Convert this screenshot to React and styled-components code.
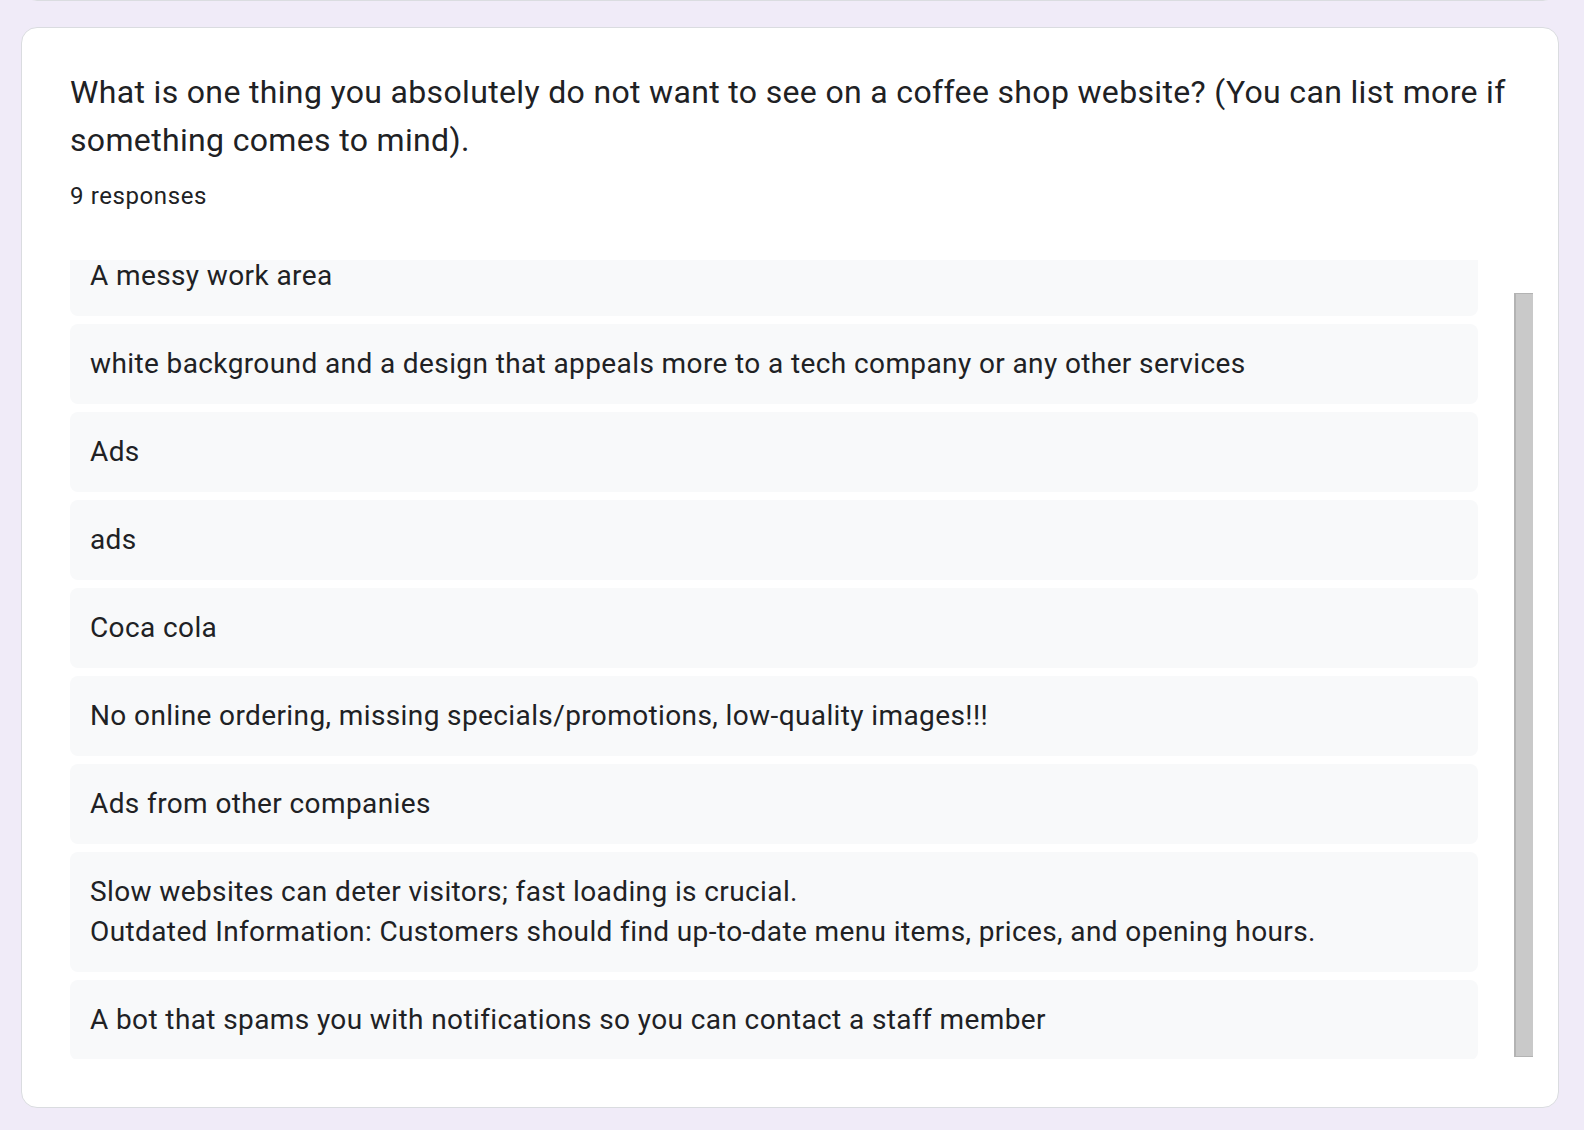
import styled, { createGlobalStyle } from 'styled-components'

const responses = [
    'A messy work area',
    'white background and a design that appeals more to a tech company or any other services',
    'Ads',
    'ads',
    'Coca cola',
    'No online ordering, missing specials/promotions, low-quality images!!!',
    'Ads from other companies',
    'Slow websites can deter visitors; fast loading is crucial.\nOutdated Information: Customers should find up-to-date menu items, prices, and opening hours.',
    'A bot that spams you with notifications so you can contact a staff member',
]

const App = () => {
    return (
        <Page>
            <GlobalStyle />
            <PrevCard />
            <Card>
                <Title>
                    What is one thing you absolutely do not want to see on a
                    coffee shop website? (You can list more if something comes
                    to mind).
                </Title>
                <Count>9 responses</Count>

                <ResponseArea>
                    <Viewport>
                        <List>
                            {responses.map((text, i) => (
                                <Row key={i}>{text}</Row>
                            ))}
                        </List>
                    </Viewport>
                    <Track>
                        <Thumb />
                    </Track>
                </ResponseArea>
            </Card>
        </Page>
    )
}

export default App

const GlobalStyle = createGlobalStyle`
    html, body {
        margin: 0;
        background: #f0ebf8;
    }
    body {
        font-family: Roboto, "Liberation Sans", Arial, sans-serif;
        color: #202124;
        overflow: hidden;
    }
    * {
        box-sizing: border-box;
    }
`

const Page = styled.div`
    min-height: 1130px;
    padding-left: 21px;
    overflow: hidden;
`

const PrevCard = styled.div`
    width: 1538px;
    height: 31px;
    margin-top: -30px;
    background: #fff;
    border: 1px solid #dadce0;
    border-radius: 0 0 16px 16px;
`

const Card = styled.div`
    width: 1538px;
    margin-top: 26px;
    padding: 40px 48px 48px;
    background: #fff;
    border: 1px solid #dadce0;
    border-radius: 16px;
`

const Title = styled.div`
    font-size: 32px;
    line-height: 48px;
    letter-spacing: 0.34px;
    font-weight: 400;
`

const Count = styled.div`
    margin-top: 16px;
    font-size: 24px;
    line-height: 32px;
    letter-spacing: 0.6px;
`

const ResponseArea = styled.div`
    display: flex;
    margin-top: 48px;
    margin-right: -23px;
    height: 799px;
`

const Viewport = styled.div`
    flex: 1;
    margin-right: 36px;
    overflow: hidden;
`

const List = styled.div`
    display: flex;
    flex-direction: column;
    gap: 8px;
    margin-top: -24px;
`

const Row = styled.div`
    padding: 20px;
    background: #f8f9fa;
    border-radius: 8px;
    font-size: 28px;
    line-height: 40px;
    letter-spacing: 0.39px;
    white-space: pre-line;
`

const Track = styled.div`
    width: 19px;
    padding-top: 33px;
`

const Thumb = styled.div`
    height: 764px;
    background: #c9c9c9;
    border-left: 2px solid #b3b3b3;
    border-top: 1px solid #b3b3b3;
    border-bottom: 1px solid #b3b3b3;
`
